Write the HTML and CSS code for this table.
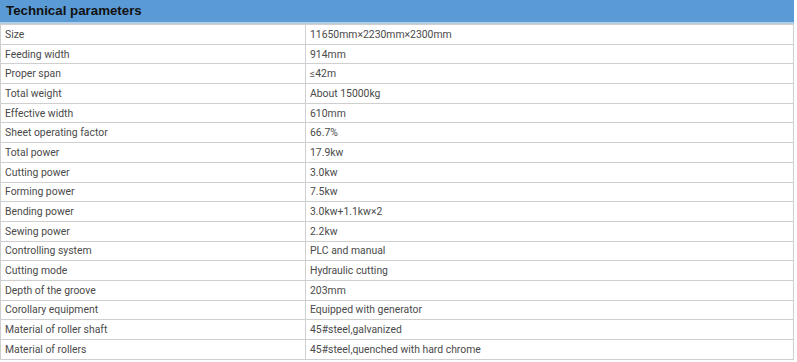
FILE: index.html
```html
<!DOCTYPE html>
<html>
<head>
<meta charset="utf-8">
<link rel="stylesheet" href="styles.css">
</head>
<body>
<div class="wrap">
  <div class="title">Technical parameters</div>
  <table class="params">
    <tr><td>Size</td><td>11650mm×2230mm×2300mm</td></tr>
    <tr><td>Feeding width</td><td>914mm</td></tr>
    <tr><td>Proper span</td><td>≤42m</td></tr>
    <tr><td>Total weight</td><td>About 15000kg</td></tr>
    <tr><td>Effective width</td><td>610mm</td></tr>
    <tr><td>Sheet operating factor</td><td>66.7%</td></tr>
    <tr><td>Total power</td><td>17.9kw</td></tr>
    <tr><td>Cutting power</td><td>3.0kw</td></tr>
    <tr><td>Forming power</td><td>7.5kw</td></tr>
    <tr><td>Bending power</td><td>3.0kw+1.1kw×2</td></tr>
    <tr><td>Sewing power</td><td>2.2kw</td></tr>
    <tr><td>Controlling system</td><td>PLC and manual</td></tr>
    <tr><td>Cutting mode</td><td>Hydraulic cutting</td></tr>
    <tr><td>Depth of the groove</td><td>203mm</td></tr>
    <tr><td>Corollary equipment</td><td>Equipped with generator</td></tr>
    <tr><td>Material of roller shaft</td><td>45#steel,galvanized</td></tr>
    <tr><td>Material of rollers</td><td>45#steel,quenched with hard chrome</td></tr>
  </table>
</div>
</body>
</html>
```
FILE: styles.css
```css
html, body {
  margin: 0;
  padding: 0;
  background: #fff;
}
.wrap {
  width: 794px;
}
.title {
  height: 22px;
  line-height: 22px;
  background: #5b9bd5;
  border-bottom: 2px solid #b4cde6;
  color: #111;
  font-family: "Liberation Sans", Arial, sans-serif;
  font-weight: bold;
  font-size: 13.3px;
  padding-left: 6px;
}
.params {
  width: 794px;
  border-collapse: collapse;
  font-family: Roboto, "Liberation Sans", sans-serif;
  font-size: 10.4px;
  color: #4a4a4a;
}
.params td {
  border: 1px solid #cfcfcf;
  height: 18.7px;
  padding: 0 0 0 4px;
  vertical-align: middle;
}
.params td:first-child {
  width: 300px;
}
```
